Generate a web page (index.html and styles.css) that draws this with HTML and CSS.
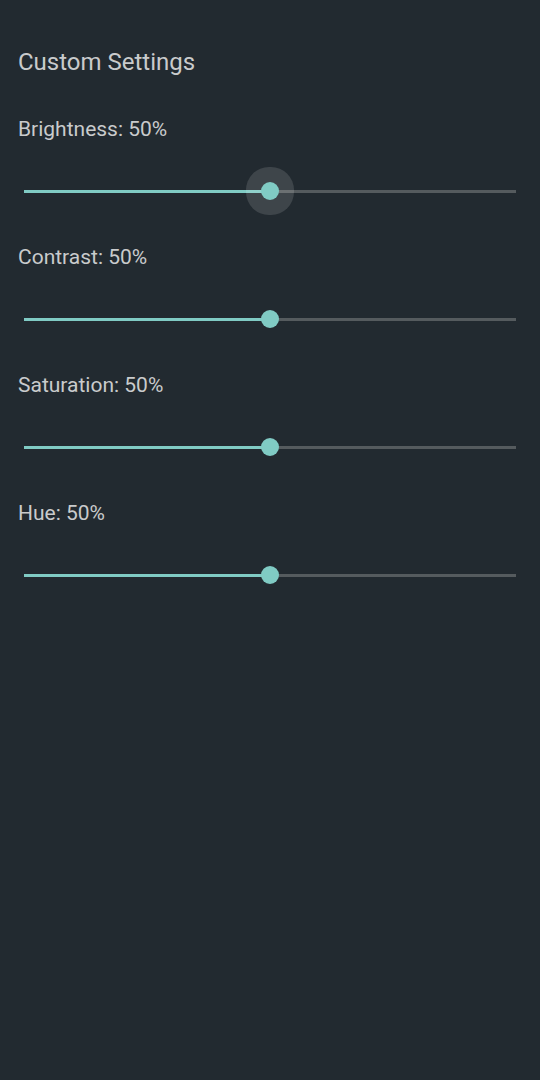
FILE: index.html
```html
<!DOCTYPE html>
<html lang="en">
<head>
    <meta charset="UTF-8">
    <meta name="viewport" content="width=device-width, initial-scale=1.0">
    <title>Custom Settings</title>
    <link rel="stylesheet" href="styles.css">
</head>
<body>

    <div class="settings">
        <h1 class="title">Custom Settings</h1>

        <!-- Brightness (focused) -->
        <div class="setting">
            <div class="label">Brightness: 50%</div>
            <div class="slider">
                <div class="track"><div class="fill"></div></div>
                <div class="thumb focused"></div>
            </div>
        </div>

        <div class="setting">
            <div class="label">Contrast: 50%</div>
            <div class="slider">
                <div class="track"><div class="fill"></div></div>
                <div class="thumb"></div>
            </div>
        </div>

        <div class="setting">
            <div class="label">Saturation: 50%</div>
            <div class="slider">
                <div class="track"><div class="fill"></div></div>
                <div class="thumb"></div>
            </div>
        </div>

        <div class="setting">
            <div class="label">Hue: 50%</div>
            <div class="slider">
                <div class="track"><div class="fill"></div></div>
                <div class="thumb"></div>
            </div>
        </div>
    </div>

</body>
</html>
```
FILE: styles.css
```css
body {
    font-family: Roboto, 'Noto Sans', sans-serif;
    background: #222a30;
    color: #c9cbcc;
    margin: 0;
    padding: 0;
    height: 1080px;
}
.settings {
    padding: 46px 18px 0 18px;
}
.title {
    font-size: 24px;
    font-weight: 400;
    margin: 0 0 39px 0;
    line-height: 32px;
}
.label {
    font-size: 21px;
    line-height: 24px;
}
.slider {
    position: relative;
    height: 48px;
    margin: 26px 6px 30px 6px;
}
.track {
    position: absolute;
    left: 0;
    right: 0;
    top: 23px;
    height: 3px;
    background: #555b5e;
}
.fill {
    width: 50%;
    height: 100%;
    background: #80cbc4;
}
.thumb {
    position: absolute;
    left: 50%;
    top: 24px;
    width: 18px;
    height: 18px;
    margin: -9px 0 0 -9px;
    border-radius: 50%;
    background: #80cbc4;
}
.thumb.focused {
    box-shadow: 0 0 0 15px rgba(255, 255, 255, 0.13);
}
```
